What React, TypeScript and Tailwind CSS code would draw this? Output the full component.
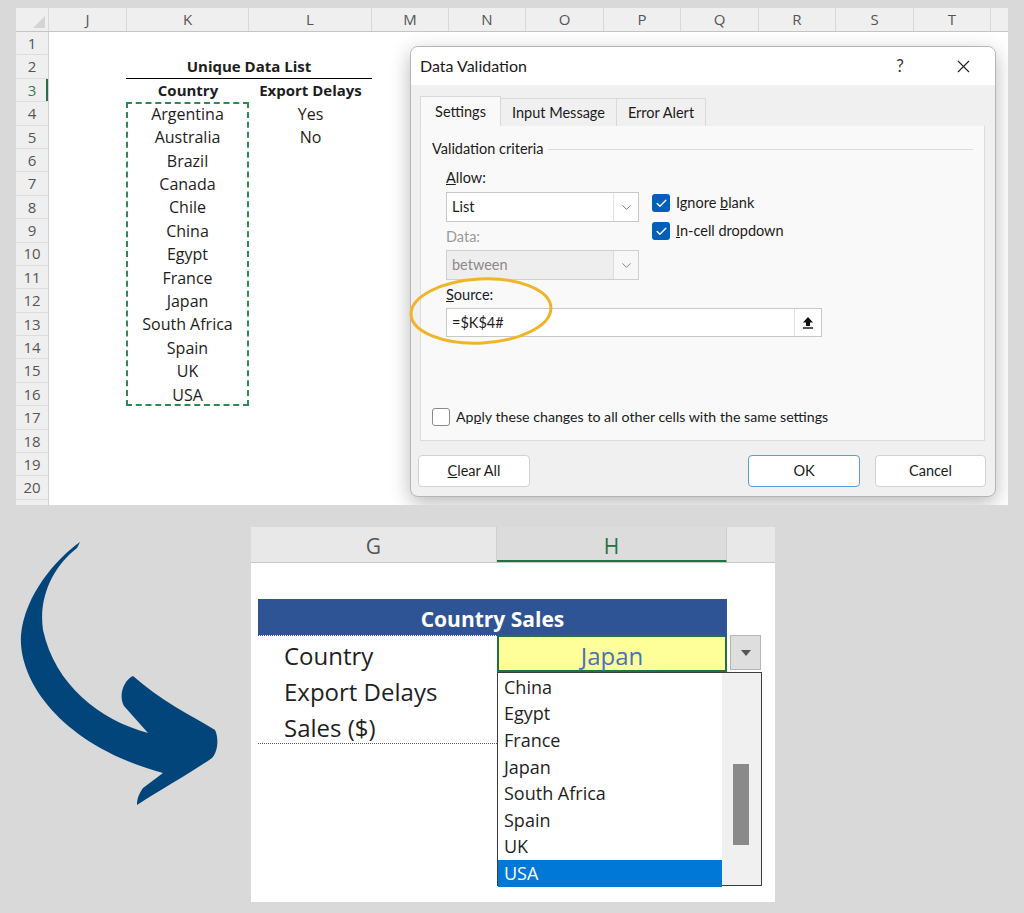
import React from "react";
import { Check, ChevronDown, X } from "lucide-react";

const topCols = [
  { l: "J", c: "w-[78px]" },
  { l: "K", c: "w-[122px]" },
  { l: "L", c: "w-[123px]" },
  { l: "M", c: "w-[77px]" },
  { l: "N", c: "w-[77px]" },
  { l: "O", c: "w-[78px]" },
  { l: "P", c: "w-[77px]" },
  { l: "Q", c: "w-[78px]" },
  { l: "R", c: "w-[77px]" },
  { l: "S", c: "w-[78px]" },
  { l: "T", c: "w-[77px]" },
];

const countries = [
  "Argentina",
  "Australia",
  "Brazil",
  "Canada",
  "Chile",
  "China",
  "Egypt",
  "France",
  "Japan",
  "South Africa",
  "Spain",
  "UK",
  "USA",
];

const rows = Array.from({ length: 20 }, (_, i) => i + 1);

function Chk({ checked }: { checked: boolean }) {
  return checked ? (
    <span className="w-[18px] h-[18px] rounded-[3px] bg-[#005fb8] flex items-center justify-center shrink-0">
      <Check size={13} strokeWidth={2.5} color="#ffffff" />
    </span>
  ) : (
    <span className="w-[18px] h-[18px] rounded-[3px] bg-white border border-[#8a8a8a] shrink-0" />
  );
}

function Dialog() {
  return (
    <div className="absolute left-[394px] top-[38px] w-[586px] h-[451px] rounded-[8px] border border-[#b5b5b5] bg-[#f0f0f0] shadow-[0_6px_20px_rgba(0,0,0,0.28)] font-['Lato',sans-serif] text-[14.5px] text-[#1b1b1b] flex flex-col overflow-hidden">
      <div className="h-[38px] bg-white flex items-center pl-[9px] shrink-0">
        <span className="text-[16px] text-[#1a1a1a]">Data Validation</span>
        <span className="ml-auto w-[20px] text-center text-[17px] text-[#333]">?</span>
        <span className="ml-[43px] mr-[21px] flex items-center">
          <X size={21} strokeWidth={1.3} color="#222" />
        </span>
      </div>
      <div className="flex items-end pl-[9px] pt-[11px] h-[41px] shrink-0">
        <div className="w-[81px] h-[30px] bg-[#f9f9f9] border border-b-0 border-[#d9d9d9] flex items-center justify-center">
          Settings
        </div>
        <div className="w-[116px] h-[28px] bg-[#f0f0f0] border border-l-0 border-b-0 border-[#d9d9d9] flex items-center justify-center">
          Input Message
        </div>
        <div className="w-[89px] h-[28px] bg-[#f0f0f0] border border-l-0 border-b-0 border-[#d9d9d9] flex items-center justify-center">
          Error Alert
        </div>
      </div>
      <div className="ml-[9px] w-[565px] h-[315px] bg-[#f9f9f9] border border-t-0 border-[#dcdcdc] pl-[11px] pt-[13px] flex flex-col shrink-0">
        <div className="flex items-center h-[20px] pr-[11px]">
          <span>Validation criteria</span>
          <span className="flex-1 h-px bg-[#dcdcdc] ml-[4px]" />
        </div>
        <div className="ml-[14px] mt-[9px] h-[20px] flex items-center">
          <span>
            <span className="underline">A</span>llow:
          </span>
        </div>
        <div className="ml-[14px] flex">
          <div className="w-[193px] flex flex-col">
            <div className="mt-[4px] h-[30px] bg-white border border-[#c8c8c8] flex items-center">
              <span className="pl-[5px] flex-1">List</span>
              <span className="w-[25px] h-full border-l border-[#e3e3e3] flex items-center justify-center">
                <ChevronDown size={15} strokeWidth={1.4} color="#666" />
              </span>
            </div>
            <div className="mt-[5px] h-[20px] flex items-center text-[#9a9a9a]">Data:</div>
            <div className="mt-[3px] h-[30px] bg-[#eeeeee] border border-[#cfcfcf] flex items-center text-[#8a8a8a]">
              <span className="pl-[5px] flex-1">between</span>
              <span className="w-[25px] h-full border-l border-[#dcdcdc] bg-[#f7f7f7] flex items-center justify-center">
                <ChevronDown size={15} strokeWidth={1.4} color="#777" />
              </span>
            </div>
            <div className="mt-[5px] h-[20px] flex items-center">
              <span>
                <span className="underline">S</span>ource:
              </span>
            </div>
          </div>
          <div className="ml-[13px] mt-[6px] flex flex-col">
            <div className="flex items-center h-[18px]">
              <Chk checked />
              <span className="ml-[6px]">
                Ignore <span className="underline">b</span>lank
              </span>
            </div>
            <div className="flex items-center h-[18px] mt-[10px]">
              <Chk checked />
              <span className="ml-[6px]">
                <span className="underline">I</span>n-cell dropdown
              </span>
            </div>
          </div>
        </div>
        <div className="ml-[14px] mt-[3px] w-[376px] h-[29px] bg-white border border-[#c8c8c8] flex items-center">
          <span className="pl-[5px] flex-1">=$K$4#</span>
          <span className="w-[27px] h-full border-l border-[#e0e0e0] flex items-center justify-center">
            <svg width="12" height="13" viewBox="0 0 12 13">
              <path d="M6 1 L11 6.5 H8 V10 H4 V6.5 H1 Z" fill="#111" />
              <rect x="1" y="11.3" width="10" height="1.4" fill="#111" />
            </svg>
          </span>
        </div>
        <div className="mt-[71px] flex items-center h-[18px]">
          <Chk checked={false} />
          <span className="ml-[6px] text-[14.2px]">
            Ap<span className="underline">p</span>ly these changes to all other cells with the same settings
          </span>
        </div>
      </div>
      <div className="mt-[14px] flex pl-[7px] pr-[9px]">
        <div className="w-[112px] h-[32px] bg-white border border-[#d2d2d2] rounded-[4px] flex items-center justify-center">
          <span>
            <span className="underline">C</span>lear All
          </span>
        </div>
        <div className="ml-auto w-[112px] h-[32px] bg-white border border-[#5b9bd5] rounded-[4px] flex items-center justify-center">
          OK
        </div>
        <div className="ml-[15px] w-[111px] h-[32px] bg-white border border-[#d2d2d2] rounded-[4px] flex items-center justify-center">
          Cancel
        </div>
      </div>
    </div>
  );
}

function TopSheet() {
  return (
    <div className="relative ml-[16px] w-[992px] h-[497px] bg-white overflow-hidden text-[#1d1d1d] flex flex-col">
      <div className="flex h-[24px] shrink-0 bg-[#efefef] border-b border-[#c4c4c4] text-[#555] text-[15px]">
        <div className="w-[33px] border-r border-[#d8d8d8] relative">
          <svg className="absolute right-[3px] bottom-[3px]" width="12" height="12" viewBox="0 0 12 12">
            <path d="M12 0 L12 12 L0 12 Z" fill="#d4d4d4" />
          </svg>
        </div>
        {topCols.map((c) => (
          <div key={c.l} className={`${c.c} border-r border-[#d8d8d8] flex items-center justify-center`}>
            {c.l}
          </div>
        ))}
        <div className="flex-1" />
      </div>
      <div className="flex flex-1">
        <div className="w-[33px] bg-[#efefef] border-r border-[#d0d0d0] flex flex-col text-[15px] text-[#555]">
          {rows.map((r) => (
            <div
              key={r}
              className={
                r === 3
                  ? "h-[23.4px] border-b border-[#dddddd] flex items-center justify-center text-[#3a7a55] shadow-[inset_-2px_0_0_#217346]"
                  : "h-[23.4px] border-b border-[#dddddd] flex items-center justify-center"
              }
            >
              {r}
            </div>
          ))}
        </div>
        <div className="flex text-[16px]">
          <div className="w-[78px]" />
          <div className="w-[245px] flex flex-col">
            <div className="h-[23.4px]" />
            <div className="h-[23.4px] border-b border-black -ml-px flex items-center justify-center font-bold text-[15px]">
              Unique Data List
            </div>
            <div className="flex h-[23.4px] font-bold text-[15px]">
              <div className="w-[122px] flex items-center justify-center">Country</div>
              <div className="w-[123px] flex items-center justify-center">Export Delays</div>
            </div>
            <div className="flex">
              <div className="w-[123px] -ml-px flex flex-col outline-2 outline-dashed outline-[#2e8b57] -outline-offset-2">
                {countries.map((c) => (
                  <div key={c} className="h-[23.4px] flex items-center justify-center">
                    {c}
                  </div>
                ))}
              </div>
              <div className="w-[123px] flex flex-col">
                <div className="h-[23.4px] flex items-center justify-center">Yes</div>
                <div className="h-[23.4px] flex items-center justify-center">No</div>
              </div>
            </div>
          </div>
        </div>
      </div>
      <Dialog />
      <svg className="absolute left-[391px] top-[267px]" width="152" height="74" viewBox="0 0 152 74">
        <ellipse
          cx="74"
          cy="36"
          rx="70"
          ry="32"
          fill="none"
          stroke="#f0b429"
          strokeWidth="3"
          transform="rotate(-3 74 36)"
        />
      </svg>
    </div>
  );
}

const listItems = ["China", "Egypt", "France", "Japan", "South Africa", "Spain", "UK", "USA"];

function Bottom() {
  return (
    <div className="mt-[22px] flex">
      <div className="w-[251px] h-[375px]">
        <svg width="251" height="375" viewBox="0 7 251 375">
          <path
            d="M80 22 C55 40 25 75 21 115 C18 160 60 225 163 253 L143 268 C138 275 137 280 137 285 C160 270 195 250 212 238 C218 232 219 218 215 210 C190 195 160 180 133 156 C124 160 118 175 124 186 L148 213 C100 200 55 165 43 110 C38 75 55 45 77 28 Z"
            fill="#01457a"
          />
        </svg>
      </div>
      <div className="relative w-[524px] h-[375px] bg-white">
        <div className="flex h-[36px] border-b border-[#c8c8c8] text-[21px] text-[#555]">
          <div className="w-[246px] bg-[#e8e8e8] border-r border-[#cfcfcf] flex items-center justify-center pt-[5px]">G</div>
          <div className="w-[230px] bg-[#dcdcdc] border-r border-[#cfcfcf] border-b-2 border-b-[#217346] flex items-center justify-center pt-[6px] text-[#217346]">
            H
          </div>
          <div className="flex-1 bg-[#e8e8e8]" />
        </div>
        <div className="mt-[36px] ml-[7px] w-[469px] h-[36px] bg-[#2f5496] text-white font-bold text-[21px] flex items-center justify-center pt-[5px]">
          Country Sales
        </div>
        <div className="ml-[7px] flex flex-col text-[24px] text-[#1f1f1f]">
          <div className="flex h-[37px]">
            <div className="w-[239px] border-t border-dotted border-[#555] pl-[26px] pt-[4px] flex items-center">Country</div>
            <div className="w-[230px] bg-[#ffff99] border-2 border-[#217346] flex items-center justify-center pt-[4px] text-[#4a72b8]">
              Japan
            </div>
            <div className="ml-[3px] w-[31px] h-[35px] bg-[#dedede] border border-[#b5b5b5] flex items-center justify-center">
              <svg width="10" height="6" viewBox="0 0 10 6">
                <path d="M0 0 H10 L5 6 Z" fill="#555" />
              </svg>
            </div>
          </div>
          <div className="h-[36px] w-[239px] pl-[26px] pt-[4px] flex items-center">Export Delays</div>
          <div className="h-[36px] w-[239px] pl-[26px] pt-[4px] flex items-center border-b border-dotted border-[#555]">Sales ($)</div>
        </div>
        <div className="absolute left-[246px] top-[145px] w-[265px] h-[214px] bg-white border border-[#3c3c3c] flex text-[18px] text-[#1f1f1f]">
          <div className="w-[224px] flex flex-col pt-[1px]">
            {listItems.map((it) => (
              <div
                key={it}
                className={
                  it === "USA"
                    ? "h-[26.6px] pl-[6px] flex items-center bg-[#0078d7] text-white"
                    : "h-[26.6px] pl-[6px] flex items-center"
                }
              >
                {it}
              </div>
            ))}
          </div>
          <div className="flex-1 bg-[#f0f0f0] pl-[11px] pt-[91px]">
            <div className="w-[16px] h-[81px] bg-[#8a8a8a]" />
          </div>
        </div>
      </div>
    </div>
  );
}

export default function App() {
  return (
    <div className="w-[1024px] h-[913px] bg-[#d9d9d9] overflow-hidden pt-[8px] font-['Open_Sans',sans-serif]">
      <TopSheet />
      <Bottom />
    </div>
  );
}
